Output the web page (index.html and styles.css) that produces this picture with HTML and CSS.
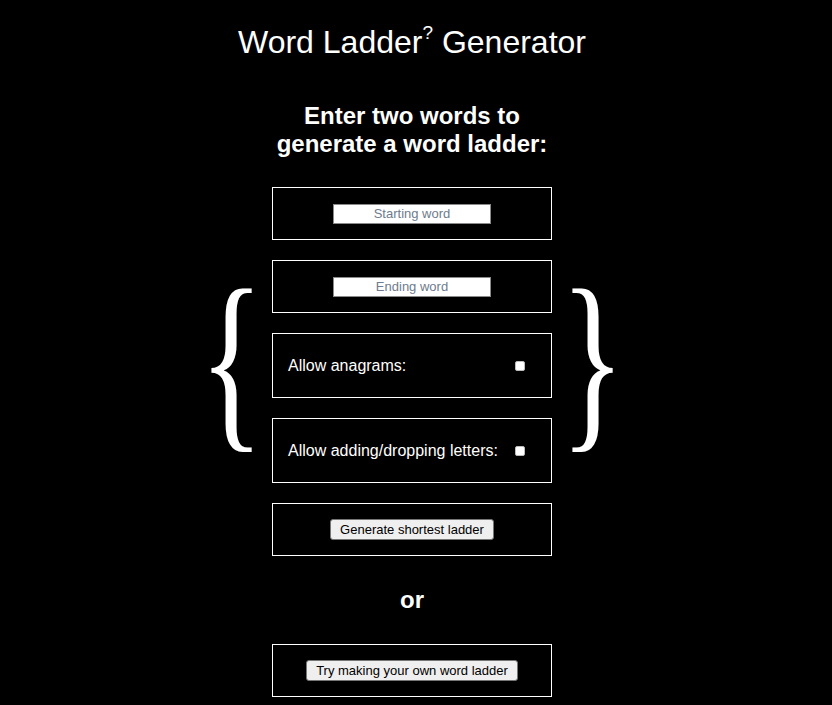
FILE: index.html
```html
<!DOCTYPE html>
<html>
<head>
<meta charset="utf-8">
<title>Word Ladder Generator</title>
<link rel="stylesheet" href="styles.css">
</head>
<body>
<h1 class="title">Word Ladder<sup class="sq">?</sup> Generator</h1>
<h2 class="prompt">Enter two words to<br>generate a word ladder:</h2>
<div class="stack">
  <div class="box box-input"><input class="word" type="text" placeholder="Starting word"></div>
  <div class="braced">
    <span class="brace">{</span>
    <div class="inner">
      <div class="box box-input"><input class="word" type="text" placeholder="Ending word"></div>
      <div class="box box-option"><label class="opt-label">Allow anagrams:</label><input class="chk" type="checkbox"></div>
      <div class="box box-option"><label class="opt-label">Allow adding/dropping letters:</label><input class="chk" type="checkbox"></div>
    </div>
    <span class="brace">}</span>
  </div>
  <div class="box box-input"><button class="btn">Generate shortest ladder</button></div>
  <div class="or">or</div>
  <div class="box box-input"><button class="btn">Try making your own word ladder</button></div>
</div>
</body>
</html>
```
FILE: styles.css
```css
html, body {
  margin: 0;
  padding: 0;
  background: #000;
  color: #fff;
  font-family: "Liberation Sans", Arial, sans-serif;
}
body {
  padding-right: 8px;
}
.title {
  margin: 0;
  padding-top: 22px;
  text-align: center;
  font-weight: normal;
  font-size: 32px;
  line-height: 40px;
}
.sq {
  font-size: 19px;
  vertical-align: 0;
  position: relative;
  top: -14px;
}
.prompt {
  margin: 35px 0 0;
  text-align: center;
  font-size: 24px;
  line-height: 28px;
  font-weight: bold;
}
.stack {
  display: flex;
  flex-direction: column;
  align-items: center;
  gap: 20px;
  margin-top: 29px;
}
.braced {
  display: flex;
  align-items: center;
}
.inner {
  display: flex;
  flex-direction: column;
  gap: 20px;
  width: 280px;
}
.brace {
  font-family: "Liberation Serif", "Times New Roman", serif;
  font-size: 198px;
  line-height: 1;
  width: 41px;
  margin: 0 20px;
  display: flex;
  justify-content: center;
  transform: scaleX(0.68);
  position: relative;
  top: -12px;
}
.box {
  box-sizing: border-box;
  width: 280px;
  border: 1px solid #fff;
}
.box-input {
  height: 53px;
  display: flex;
  align-items: center;
  justify-content: center;
}
.word {
  box-sizing: border-box;
  width: 158px;
  height: 20px;
  border: 1px solid #8a8a8a;
  background: #fff;
  text-align: center;
  font-family: "Liberation Sans", Arial, sans-serif;
  font-size: 13px;
  padding: 0;
  outline: none;
}
.word::placeholder {
  color: #6d7c8e;
}
.box-option {
  height: 65px;
  display: flex;
  align-items: center;
  justify-content: space-between;
  padding: 0 26px 0 15px;
  font-size: 16px;
}
.chk {
  appearance: none;
  -webkit-appearance: none;
  width: 10px;
  height: 10px;
  margin: 0;
  background: #fff;
  border: 1px solid #bbb;
  border-radius: 2px;
  box-sizing: border-box;
}
.btn {
  font-family: "Liberation Sans", Arial, sans-serif;
  font-size: 13px;
  color: #000;
  background: #efefef;
  border: 1px solid #767676;
  border-radius: 3px;
  height: 21px;
  padding: 0 9px;
  line-height: 19px;
}
.or {
  font-size: 24px;
  font-weight: bold;
  line-height: 28px;
  margin: 10px 0;
}
```
